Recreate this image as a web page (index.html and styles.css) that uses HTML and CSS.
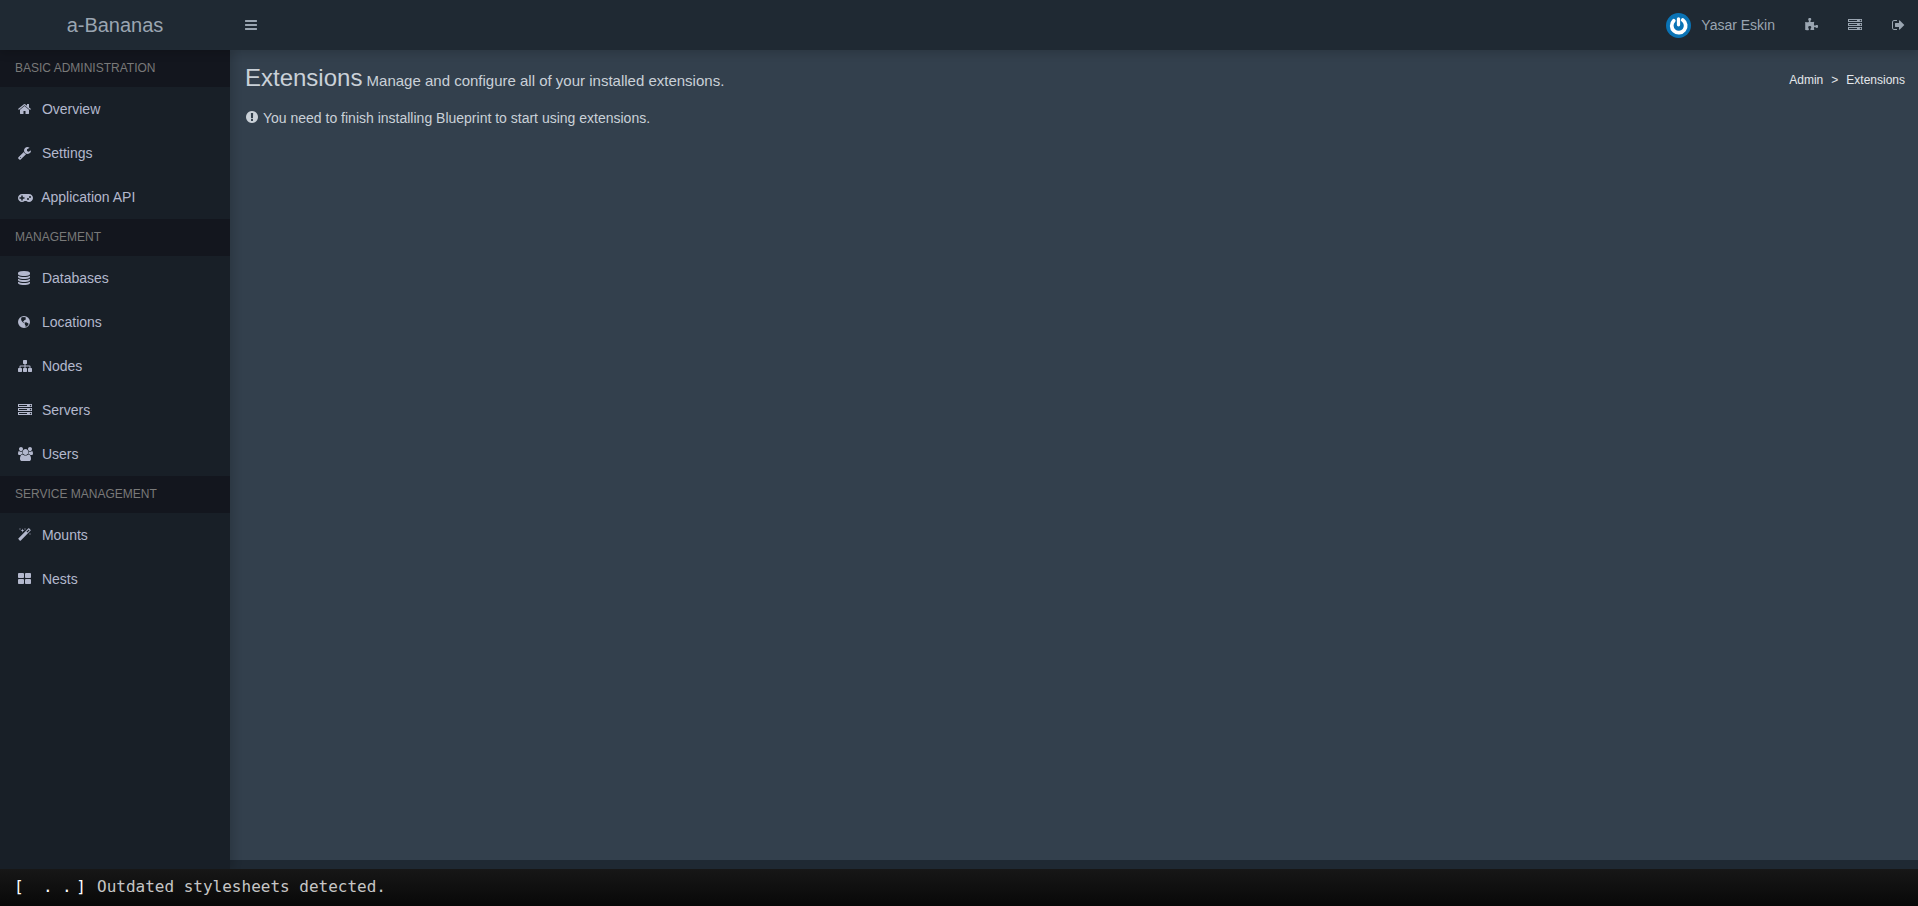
FILE: index.html
```html
<!DOCTYPE html>
<html lang="en">
<head>
  <meta charset="UTF-8">
  <title>a-Bananas - Extensions</title>
  <meta name="viewport" content="width=device-width, initial-scale=1.0">
  <link rel="stylesheet" href="styles.css">
</head>
<body>

<!-- Icons -->
<svg class="icon-defs" aria-hidden="true">
  <symbol id="server" viewBox="0 0 1792 1792"><path d="M128 1408h1024v-128h-1024v128zm0-512h1024v-128h-1024v128zm1568 448q0-40-28-68t-68-28-68 28-28 68 28 68 68 28 68-28 28-68zm-1568-960h1024v-128h-1024v128zm1568 448q0-40-28-68t-68-28-68 28-28 68 28 68 68 28 68-28 28-68zm0-512q0-40-28-68t-68-28-68 28-28 68 28 68 68 28 68-28 28-68zm96 832v384h-1792v-384h1792zm0-512v384h-1792v-384h1792zm0-512v384h-1792v-384h1792z"/></symbol>
</svg>

<!-- Header -->
<header class="main-header">
  <a class="logo" href="#">a-Bananas</a>
  <nav class="navbar">
    <button class="nav-link" type="button" aria-label="Toggle navigation">
      <svg class="icon w12" viewBox="128 0 1536 1792"><path d="M1664 1344v128q0 26-19 45t-45 19h-1408q-26 0-45-19t-19-45v-128q0-26 19-45t45-19h1408q26 0 45 19t19 45zm0-512v128q0 26-19 45t-45 19h-1408q-26 0-45-19t-19-45v-128q0-26 19-45t45-19h1408q26 0 45 19t19 45zm0-512v128q0 26-19 45t-45 19h-1408q-26 0-45-19t-19-45v-128q0-26 19-45t45-19h1408q26 0 45 19t19 45z"/></svg>
    </button>
    <div class="navbar-right">
      <a class="nav-link user" href="#">
        <svg class="avatar" viewBox="0 0 50 50"><circle cx="25" cy="25" r="25" fill="#0a73b5"/><path d="M15.500 15.500A14 14 0 1 0 33.500 14" fill="none" stroke="#fff" stroke-width="7.500" stroke-linecap="round"/><path d="M25 11.500v12" stroke="#fff" stroke-width="6.500" stroke-linecap="round"/></svg>
        <span>Yasar Eskin</span>
      </a>
      <a class="nav-link" href="#" aria-label="Extensions">
        <svg class="icon w13" viewBox="64 0 1664 1792"><path d="M1755 1083q0 81-44.500 135t-123.500 54q-41 0-77.500-17.500t-59-38-56.500-38-71-17.500q-110 0-110 124 0 39 16 115t15 115v5q-22 0-33 1-34 3-97.500 11.500t-115.500 13.500-98 5q-61 0-103-26.500t-42-83.500q0-37 17.500-71t38-56.500 38-59 17.500-77.500q0-79-54-123.500t-135-44.500q-84 0-143 45.500t-59 127.500q0 43 15 83t33.500 64.500 33.500 53 15 50.500q0 45-46 89-37 35-117 35-95 0-245-24-9-2-27.500-4t-27.500-4l-13-2q-1 0-3-1-2 0-2-1v-1024q2 1 17.500 3.500t34 5 21.500 3.500q150 24 245 24 80 0 117-35 46-44 46-89 0-22-15-50.500t-33.500-53-33.500-64.500-15-83q0-82 59-127.500t144-45.500q80 0 134 44.500t54 123.500q0 41-17.500 77.500t-38 59-38 56.500-17.500 71q0 57 42 83.500t103 26.500q64 0 180-15t163-17v2q-1 2-3.500 17.500t-5 34-3.500 21.500q-24 150-24 245 0 80 35 117 44 46 89 46 22 0 50.500-15t53-33.500 64.500-33.500 83-15q82 0 127.500 59t45.500 143z"/></svg>
      </a>
      <a class="nav-link" href="#" aria-label="Servers"><svg class="icon w14"><use href="#server"/></svg></a>
      <a class="nav-link" href="#" aria-label="Logout">
        <svg class="icon w13" viewBox="64 0 1664 1792"><path d="M704 1440q0 4 1 20t.5 26.500-3 23.500-10 19.500-20.500 6.500h-320q-119 0-203.500-84.500t-84.500-203.500v-704q0-119 84.500-203.500t203.500-84.500h320q13 0 22.500 9.500t9.500 22.500q0 4 1 20t.5 26.500-3 23.500-10 19.500-20.500 6.500h-320q-66 0-113 47t-47 113v704q0 66 47 113t113 47h312l11.500 1 11.500 3 8 5.500 7 9 2 13.500zm928-544q0 26-19 45l-544 544q-19 19-45 19t-45-19-19-45v-288h-448q-26 0-45-19t-19-45v-384q0-26 19-45t45-19h448v-288q0-26 19-45t45-19 45 19l544 544q19 19 19 45z"/></svg>
      </a>
    </div>
  </nav>
</header>

<div class="wrapper">
  <!-- Sidebar -->
  <aside class="sidebar">
    <h2 class="menu-header">BASIC ADMINISTRATION</h2>
    <a class="menu-item" href="#"><span class="menu-icon"><svg class="icon w13" viewBox="64 0 1664 1792"><path d="M1472 992v480q0 26-19 45t-45 19h-384v-384h-256v384h-384q-26 0-45-19t-19-45v-480q0-1 .5-3t.5-3l575-474 575 474q1 2 1 6zm223-69l-62 74q-8 9-21 11h-3q-13 0-21-7l-692-577-692 577q-12 8-24 7-13-2-21-11l-62-74q-8-10-7-23.500t11-21.500l719-599q32-26 76-26t76 26l244 204v-195q0-14 9-23t23-9h192q14 0 23 9t9 23v408l219 182q10 8 11 21.500t-7 23.500z"/></svg></span> <span>Overview</span></a>
    <a class="menu-item" href="#"><span class="menu-icon"><svg class="icon w13" viewBox="64 0 1664 1792"><path d="M448 1472q0-26-19-45t-45-19-45 19-19 45 19 45 45 19 45-19 19-45zm644-420l-682 682q-37 37-90 37-52 0-91-37l-106-108q-38-36-38-90 0-53 38-91l681-681q39 98 114.500 173.500t173.500 114.500zm634-435q0 39-23 106-47 134-164.500 217.500t-258.500 83.500q-185 0-316.500-131.500t-131.500-316.500 131.500-316.500 316.500-131.500q58 0 121.500 16.500t107.500 46.500q16 11 16 28t-16 28l-293 169v224l193 107q5-3 79-48.500t135.500-81 70.500-35.500q15 0 23.500 10t8.500 25z"/></svg></span> <span>Settings</span></a>
    <a class="menu-item" href="#"><span class="menu-icon"><svg class="icon w15" viewBox="0 0 1920 1792"><path fill-rule="evenodd" d="M832 1088v-128q0-14-9-23t-23-9h-192v-192q0-14-9-23t-23-9h-128q-14 0-23 9t-9 23v192h-192q-14 0-23 9t-9 23v128q0 14 9 23t23 9h192v192q0 14 9 23t23 9h128q14 0 23-9t9-23v-192h192q14 0 23-9t9-23zM1408 1152a128 128 0 1 0-256 0 128 128 0 1 0 256 0zM1664 896a128 128 0 1 0-256 0 128 128 0 1 0 256 0zM1920 1024q0 212-150 362t-362 150q-192 0-338-128h-220q-146 128-338 128-212 0-362-150t-150-362 150-362 362-150h896q212 0 362 150t150 362z"/></svg></span> <span>Application API</span></a>

    <h2 class="menu-header">MANAGEMENT</h2>
    <a class="menu-item" href="#"><span class="menu-icon"><svg class="icon w12" viewBox="128 0 1536 1792"><path d="M896 768q237 0 443-43t325-127v170q0 69-103 128t-280 93.500-385 34.500-385-34.500-280-93.500-103-128v-170q119 84 325 127t443 43zm0 768q237 0 443-43t325-127v170q0 69-103 128t-280 93.500-385 34.500-385-34.500-280-93.500-103-128v-170q119 84 325 127t443 43zm0-384q237 0 443-43t325-127v170q0 69-103 128t-280 93.500-385 34.500-385-34.500-280-93.500-103-128v-170q119 84 325 127t443 43zm0-1152q208 0 385 34.500t280 93.500 103 128v128q0 69-103 128t-280 93.500-385 34.500-385-34.500-280-93.500-103-128v-128q0-69 103-128t280-93.500 385-34.500z"/></svg></span> <span>Databases</span></a>
    <a class="menu-item" href="#"><span class="menu-icon"><svg class="icon w12" viewBox="128 0 1536 1792"><path fill-rule="evenodd" d="M896 128a768 768 0 1 0 0 1536 768 768 0 1 0 0-1536zM560 330l210-90 130 60 110-50 130 90-60 110 90 60-110 110-130 60-60 110-110 20 60 110 110 50 50 110-120-50-160-140-120-160-60-190zM1010 960l170-40 180 90 130 110-60 170-150 160-200 90 30-180-110-160z"/></svg></span> <span>Locations</span></a>
    <a class="menu-item" href="#"><span class="menu-icon"><svg class="icon w14" viewBox="0 0 1792 1792"><path d="M1792 1248v320q0 40-28 68t-68 28h-320q-40 0-68-28t-28-68v-320q0-40 28-68t68-28h96v-192h-512v192h96q40 0 68 28t28 68v320q0 40-28 68t-68 28h-320q-40 0-68-28t-28-68v-320q0-40 28-68t68-28h96v-192h-512v192h96q40 0 68 28t28 68v320q0 40-28 68t-68 28h-320q-40 0-68-28t-28-68v-320q0-40 28-68t68-28h96v-192q0-52 38-90t90-38h512v-192h-96q-40 0-68-28t-28-68v-320q0-40 28-68t68-28h320q40 0 68 28t28 68v320q0 40-28 68t-68 28h-96v192h512q52 0 90 38t38 90v192h96q40 0 68 28t28 68z"/></svg></span> <span>Nodes</span></a>
    <a class="menu-item" href="#"><span class="menu-icon"><svg class="icon w14"><use href="#server"/></svg></span> <span>Servers</span></a>
    <a class="menu-item" href="#"><span class="menu-icon"><svg class="icon w15" viewBox="64 0 1920 1792"><path d="M657 896q-162 5-265 128h-134q-82 0-138-40.500t-56-118.500q0-353 124-353 6 0 43.500 21t97.500 42.500 119 21.500q67 0 133-23-5 37-5 66 0 139 81 256zm1071 637q0 120-73 189.500t-194 69.500h-874q-121 0-194-69.500t-73-189.500q0-53 3.500-103.500t14-109 26.500-108.500 43-97.500 62-81 85.500-53.500 111.500-20q10 0 43 21.500t73 48 107 48 135 21.500 135-21.500 107-48 73-48 43-21.500q61 0 111.500 20t85.500 53.500 62 81 43 97.500 26.500 108.500 14 109 3.500 103.500zm-1024-1277q0 106-75 181t-181 75-181-75-75-181 75-181 181-75 181 75 75 181zm704 384q0 159-112.500 271.500t-271.500 112.500-271.500-112.500-112.500-271.500 112.500-271.500 271.500-112.500 271.500 112.500 112.500 271.500zm576 225q0 78-56 118.500t-138 40.500h-134q-103-123-265-128 81-117 81-256 0-29-5-66 66 23 133 23 59 0 119-21.500t97.500-42.500 43.500-21q124 0 124 353zm-128-609q0 106-75 181t-181 75-181-75-75-181 75-181 181-75 181 75 75 181z"/></svg></span> <span>Users</span></a>

    <h2 class="menu-header">SERVICE MANAGEMENT</h2>
    <a class="menu-item" href="#"><span class="menu-icon"><svg class="icon w13" viewBox="64 0 1664 1792"><path d="M1254 581l293-293-107-107-293 293zm447-293q0 27-18 45l-1286 1286q-18 18-45 18t-45-18l-198-198q-18-18-18-45t18-45l1286-1286q18-18 45-18t45 18l198 198q18 18 18 45zm-1351-190l98 30-98 30-30 98-30-98-98-30 98-30 30-98zm350 162l196 60-196 60-60 196-60-196-196-60 196-60 60-196zm930 478l98 30-98 30-30 98-30-98-98-30 98-30 30-98zm-640-640l98 30-98 30-30 98-30-98-98-30 98-30 30-98z"/></svg></span> <span>Mounts</span></a>
    <a class="menu-item" href="#"><span class="menu-icon"><svg class="icon w13" viewBox="64 0 1664 1792"><path d="M832 1024v384q0 52-38 90t-90 38h-512q-52 0-90-38t-38-90v-384q0-52 38-90t90-38h512q52 0 90 38t38 90zm0-768v384q0 52-38 90t-90 38h-512q-52 0-90-38t-38-90v-384q0-52 38-90t90-38h512q52 0 90 38t38 90zm896 768v384q0 52-38 90t-90 38h-512q-52 0-90-38t-38-90v-384q0-52 38-90t90-38h512q52 0 90 38t38 90zm0-768v384q0 52-38 90t-90 38h-512q-52 0-90-38t-38-90v-384q0-52 38-90t90-38h512q52 0 90 38t38 90z"/></svg></span> <span>Nests</span></a>
  </aside>

  <!-- Content -->
  <div class="main">
    <main class="content">
      <div class="content-header">
        <h1>Extensions<small> Manage and configure all of your installed extensions.</small></h1>
        <nav class="breadcrumb"><a href="#">Admin</a><span class="sep">&gt;</span><span>Extensions</span></nav>
      </div>
      <p class="notice"><svg class="icon w12" viewBox="128 0 1536 1792"><path d="M896 128q209 0 385.500 103t279.500 279.500 103 385.500-103 385.500-279.500 279.500-385.500 103-385.500-103-279.500-279.500-103-385.500 103-385.500 279.500-279.500 385.500-103zm128 1247v-190q0-14-9-23.500t-22-9.500h-192q-13 0-23 10t-10 23v190q0 13 10 23t23 10h192q13 0 22-9.500t9-23.500zm-2-344l18-621q0-12-10-18-10-8-24-8h-220q-14 0-24 8-10 6-10 18l17 621q0 10 10 17.500t24 7.500h185q14 0 23.500-7.500t10.500-17.500z"/></svg><span>You need to finish installing Blueprint to start using extensions.</span></p>
    </main>
    <footer class="main-footer"></footer>
  </div>
</div>

<!-- Status bar -->
<div class="status-bar" role="status">
  <span class="loader"><span class="open">[</span><span class="dot">.</span><span class="dot">.</span><span>]</span></span>
  <span>Outdated stylesheets detected.</span>
</div>

</body>
</html>
```
FILE: styles.css
```css
* { box-sizing: border-box; }

body {
  margin: 0;
  min-height: 100vh;
  display: flex;
  flex-direction: column;
  font-family: "Liberation Sans", Arial, sans-serif;
  font-size: 14px;
  line-height: 20px;
  color: #cad1d8;
  background: #1f2933;
}

a { color: inherit; text-decoration: none; }

/* Icons */
.icon-defs { display: none; }
.icon { height: 14px; fill: currentColor; vertical-align: -2px; }
.w12 { width: 12px; }
.w13 { width: 13px; }
.w14 { width: 14px; }
.w15 { width: 15px; }

/* Header */
.main-header {
  display: flex;
  height: 50px;
  color: #9aa5b1;
  background: #1f2933;
  box-shadow: 0 4px 8px rgba(0,0,0,0.14);
  position: relative;
  z-index: 2;
}
.logo {
  width: 230px;
  font-size: 20px;
  line-height: 50px;
  text-align: center;
}
.navbar {
  flex: 1;
  display: flex;
  justify-content: space-between;
}
.navbar-right { display: flex; }
.nav-link {
  display: flex;
  align-items: center;
  padding: 0 15px;
  border: 0;
  color: inherit;
  background: none;
}
.nav-link:last-child { padding-right: 13px; }
.nav-link:hover { color: #fff; }
.user { gap: 10px; }
.avatar { width: 25px; height: 25px; }

.wrapper { flex: 1; display: flex; }

/* Sidebar */
.sidebar {
  width: 230px;
  background: #181f27;
  box-shadow: 4px 0 8px rgba(0,0,0,0.14);
  position: relative;
  z-index: 1;
}
.menu-header {
  margin: 0;
  padding: 10px 15px;
  font-size: 12px;
  font-weight: normal;
  line-height: 17px;
  color: #797979;
  background: #13161e;
}
.menu-item {
  display: block;
  padding: 12px 5px 12px 18px;
  color: #b3b8cd;
}
.menu-item:hover { color: #fff; }
.menu-icon { display: inline-block; width: 20px; }

/* Content */
.main {
  flex: 1;
  display: flex;
  flex-direction: column;
}
.content { flex: 1; padding: 15px; background: #33404d; }
.content-header {
  display: flex;
  align-items: flex-start;
  justify-content: space-between;
}
.content-header h1 {
  margin: 0;
  font-size: 24px;
  font-weight: normal;
  line-height: 26px;
}
.content-header small { font-size: 15px; }
.breadcrumb {
  display: flex;
  gap: 8px;
  padding: 5px 0;
  margin-right: -2px;
  font-size: 12px;
  color: #e4e7eb;
}
.notice {
  display: flex;
  gap: 5px;
  margin: 13px 0;
  padding-left: 1px;
}
.notice .icon { margin-top: 2px; }
.main-footer { height: 9px; background: #1f2933; }

/* Status bar */
.status-bar {
  display: flex;
  align-items: center;
  gap: 11px;
  height: 37px;
  padding: 0 14px 2px;
  font-family: "DejaVu Sans Mono", monospace;
  font-size: 16px;
  color: #c6c6c6;
  background: linear-gradient(#171717, #080808);
  position: relative;
  z-index: 3;
}
.loader {
  display: flex;
  justify-content: flex-end;
  width: 72px;
  color: #fff;
}
.loader .open { margin-right: auto; }
.loader .dot { width: 19px; text-align: center; }
```
